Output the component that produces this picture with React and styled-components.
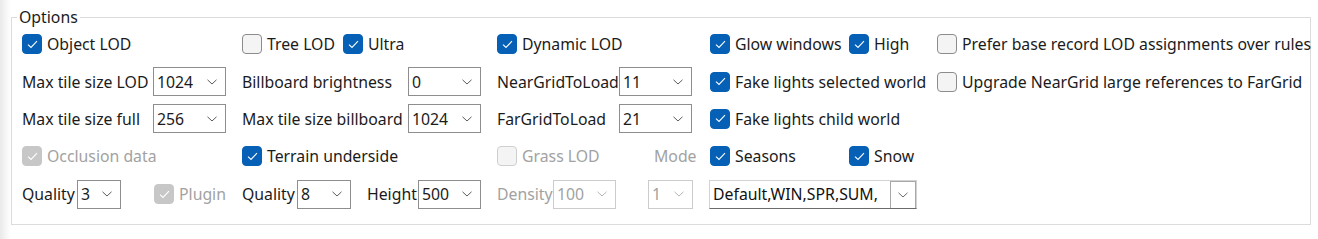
import styled, { createGlobalStyle } from "styled-components";

const GlobalStyle = createGlobalStyle`
  html, body {
    margin: 0;
    padding: 0;
  }
  body {
    width: 1318px;
    height: 239px;
    overflow: hidden;
    background: linear-gradient(to right, #e9e9e9 0, #f6f6f6 6px, #ffffff 11px);
    font-family: "Noto Sans", "Open Sans", sans-serif;
    font-size: 15.8px;
    color: #1b1b1b;
  }
`;

const Page = styled.div`
  padding: 17px 7px 0 11px;
`;

const Group = styled.div`
  position: relative;
  height: 199px;
  border: 1px solid #dcdcdc;
  padding: 7px 0 0 10px;
`;

const Legend = styled.span`
  position: absolute;
  top: -11px;
  left: 5px;
  padding: 0 2px;
  background: #fff;
  line-height: 20px;
`;

const Grid = styled.div`
  display: grid;
  grid-template-columns: 220px 255px 213px 227px 1fr;
  grid-template-rows: 38px 37px 37px 38px 38px;
`;

const Cell = styled.div`
  display: flex;
  align-items: center;
  white-space: nowrap;
`;

const CheckRow = styled.label`
  display: flex;
  align-items: center;
  gap: 5px;
  width: ${(p) => (p.$w ? `${p.$w}px` : "auto")};
  flex-shrink: 0;
  color: ${(p) => (p.$disabled ? "#a2a2a2" : "#1b1b1b")};
`;

const Box = styled.span`
  width: 20px;
  height: 20px;
  box-sizing: border-box;
  border-radius: 4px;
  display: flex;
  align-items: center;
  justify-content: center;
  flex-shrink: 0;
  background: ${(p) =>
    p.$checked ? (p.$disabled ? "#c7c7c7" : "#0560b6") : "#f4f4f4"};
  border: 1px solid
    ${(p) =>
      p.$checked
        ? p.$disabled
          ? "#c7c7c7"
          : "#0560b6"
        : p.$disabled
        ? "#cfcfcf"
        : "#8c8c8c"};
`;

const Text = styled.span`
  color: ${(p) => (p.$disabled ? "#a2a2a2" : "#1b1b1b")};
  width: ${(p) => (p.$w ? `${p.$w}px` : "auto")};
  flex-shrink: 0;
`;

const Field = styled.div`
  display: flex;
  align-items: center;
  width: ${(p) => (p.$w ? `${p.$w}px` : "auto")};
  flex-shrink: 0;
`;

const ComboBox = styled.div`
  width: ${(p) => p.$w}px;
  height: 29px;
  box-sizing: border-box;
  border: 1px solid ${(p) => (p.$disabled ? "#cccccc" : "#8e8e8e")};
  background: #fff;
  display: flex;
  align-items: center;
  justify-content: space-between;
  padding: 0 8px 0 3px;
  color: ${(p) => (p.$disabled ? "#a2a2a2" : "#1b1b1b")};
  flex-shrink: 0;
`;

const SeasonBox = styled.div`
  width: 208px;
  height: 29px;
  margin-left: -1px;
  box-sizing: border-box;
  border: 1px solid #d3d3d3;
  border-bottom-color: #6a6a6a;
  display: flex;
  align-items: center;
  background: #fff;
`;

const SeasonText = styled.span`
  flex: 1;
  overflow: hidden;
  padding-left: 3px;
  white-space: nowrap;
  color: #111;
`;

const DropButton = styled.span`
  width: 26px;
  height: 27px;
  box-sizing: border-box;
  border: 1px solid #a8a8a8;
  border-bottom: none;
  display: flex;
  align-items: center;
  justify-content: center;
  flex-shrink: 0;
`;

const Chevron = ({ color = "#5c5c5c" }) => (
  <svg width="10" height="6" viewBox="0 0 10 6">
    <path d="M0.5 0.8 L5 5 L9.5 0.8" fill="none" stroke={color} strokeWidth="1" />
  </svg>
);

const Tick = () => (
  <svg width="11" height="9" viewBox="0 0 11 9">
    <path d="M1 4.6 L4 7.4 L10 1.2" fill="none" stroke="#fff" strokeWidth="1.1" />
  </svg>
);

const Check = ({ label, checked, disabled, w }) => (
  <CheckRow $w={w} $disabled={disabled}>
    <Box $checked={checked} $disabled={disabled}>
      {checked && <Tick />}
    </Box>
    {label}
  </CheckRow>
);

const Combo = ({ value, w, disabled }) => (
  <ComboBox $w={w} $disabled={disabled}>
    <span>{value}</span>
    <Chevron color={disabled ? "#b5b5b5" : "#5c5c5c"} />
  </ComboBox>
);

const Labeled = ({ label, lw, value, cw, w, disabled }) => (
  <Field $w={w}>
    <Text $w={lw} $disabled={disabled}>
      {label}
    </Text>
    <Combo value={value} w={cw} disabled={disabled} />
  </Field>
);

const App = () => {
  return (
    <>
      <GlobalStyle />
      <Page>
        <Group>
          <Legend>Options</Legend>
          <Grid>
            {/* row 1 */}
            <Cell>
              <Check label="Object LOD" checked />
            </Cell>
            <Cell>
              <Check label="Tree LOD" w={101} />
              <Check label="Ultra" checked />
            </Cell>
            <Cell>
              <Check label="Dynamic LOD" checked />
            </Cell>
            <Cell>
              <Check label="Glow windows" checked w={139} />
              <Check label="High" checked />
            </Cell>
            <Cell>
              <Check label="Prefer base record LOD assignments over rules" />
            </Cell>

            {/* row 2 */}
            <Cell>
              <Labeled label="Max tile size LOD" lw={131} value="1024" cw={73} />
            </Cell>
            <Cell>
              <Labeled label="Billboard brightness" lw={166} value="0" cw={73} />
            </Cell>
            <Cell>
              <Labeled label="NearGridToLoad" lw={122} value="11" cw={73} />
            </Cell>
            <Cell>
              <Check label="Fake lights selected world" checked />
            </Cell>
            <Cell>
              <Check label="Upgrade NearGrid large references to FarGrid" />
            </Cell>

            {/* row 3 */}
            <Cell>
              <Labeled label="Max tile size full" lw={131} value="256" cw={73} />
            </Cell>
            <Cell>
              <Labeled label="Max tile size billboard" lw={166} value="1024" cw={73} />
            </Cell>
            <Cell>
              <Labeled label="FarGridToLoad" lw={122} value="21" cw={73} />
            </Cell>
            <Cell>
              <Check label="Fake lights child world" checked />
            </Cell>
            <Cell />

            {/* row 4 */}
            <Cell>
              <Check label="Occlusion data" checked disabled />
            </Cell>
            <Cell>
              <Check label="Terrain underside" checked />
            </Cell>
            <Cell>
              <Check label="Grass LOD" disabled w={157} />
              <Text $disabled>Mode</Text>
            </Cell>
            <Cell>
              <Check label="Seasons" checked w={139} />
              <Check label="Snow" checked />
            </Cell>
            <Cell />

            {/* row 5 */}
            <Cell>
              <Labeled label="Quality" lw={55} value="3" cw={44} w={132} />
              <Check label="Plugin" checked disabled />
            </Cell>
            <Cell>
              <Labeled label="Quality" lw={55} value="8" cw={54} w={125} />
              <Labeled label="Height" lw={51} value="500" cw={63} />
            </Cell>
            <Cell>
              <Labeled label="Density" lw={56} value="100" cw={63} w={151} disabled />
              <Combo value="1" w={45} disabled />
            </Cell>
            <Cell>
              <SeasonBox>
                <SeasonText>Default,WIN,SPR,SUM,</SeasonText>
                <DropButton>
                  <Chevron color="#6a6a6a" />
                </DropButton>
              </SeasonBox>
            </Cell>
            <Cell />
          </Grid>
        </Group>
      </Page>
    </>
  );
};

export default App;
